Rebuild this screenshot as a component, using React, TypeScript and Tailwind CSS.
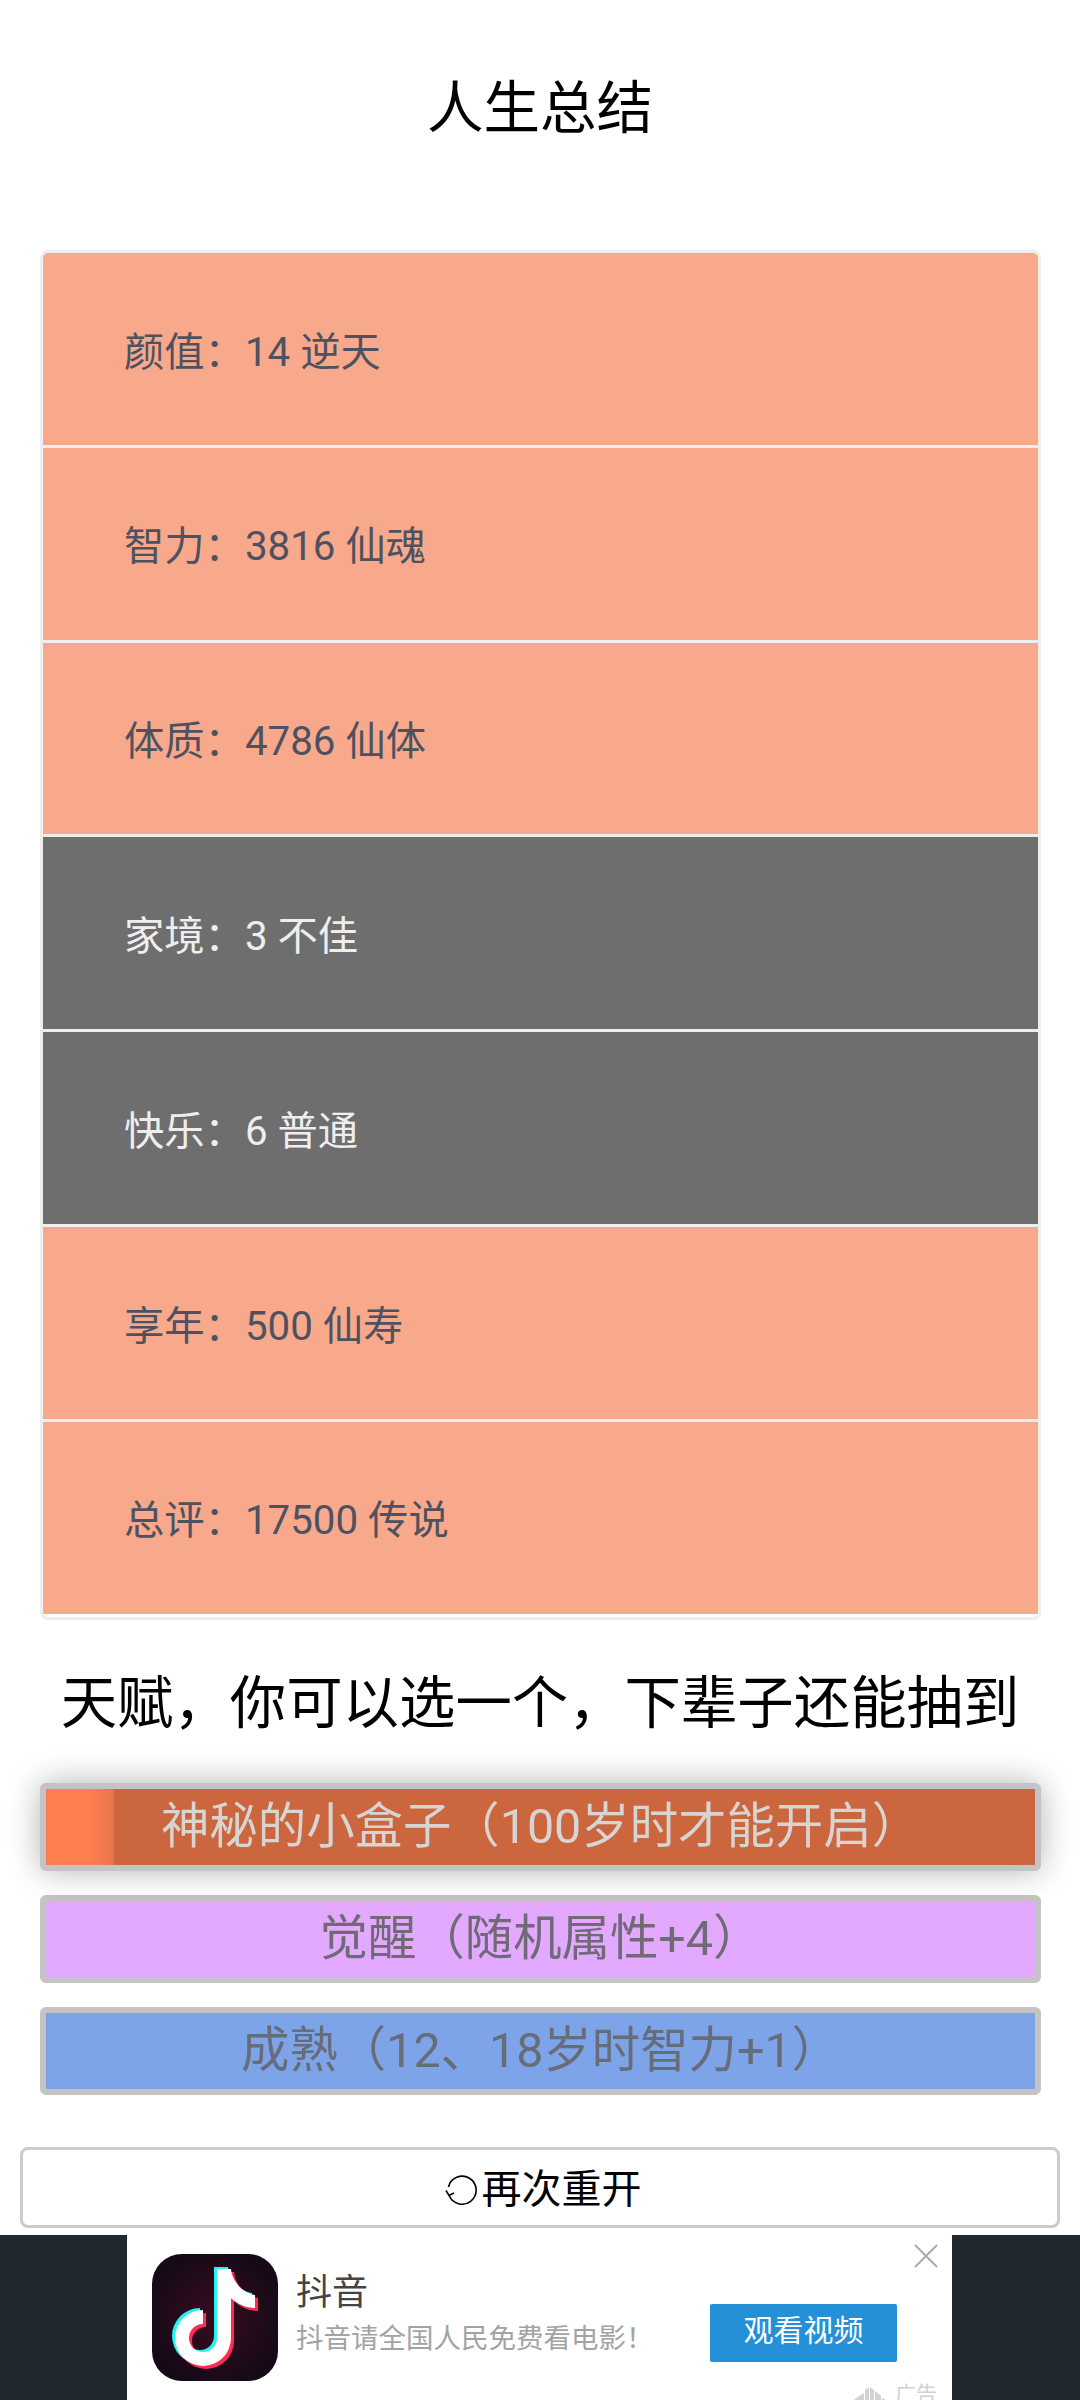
const FONT = "font-['Roboto','Noto_Sans_CJK_SC',sans-serif]";

const rows = [
  { text: '颜值：14 逆天', dark: false },
  { text: '智力：3816 仙魂', dark: false },
  { text: '体质：4786 仙体', dark: false },
  { text: '家境：3 不佳', dark: true },
  { text: '快乐：6 普通', dark: true },
  { text: '享年：500 仙寿', dark: false },
  { text: '总评：17500 传说', dark: false },
];

function DouyinIcon() {
  const note =
    'M65 15 H79 C80 27 90 39 103 41 V54 C94 54 85 50 79 44 V84 A28 28 0 1 1 51 56 V70 A14 14 0 1 0 65 84 Z';
  return (
    <div className="h-[127px] w-[126px] shrink-0 overflow-hidden rounded-[30px] bg-[radial-gradient(circle,#3a0b20_0%,#160a18_75%)]">
      <svg viewBox="0 0 126 127" className="h-full w-full blur-[0.7px]">
        <path d={note} fill="#25f4ee" transform="translate(-3 -2)" />
        <path d={note} fill="#fe2c55" transform="translate(3 3)" />
        <path d={note} fill="#ffffff" />
      </svg>
    </div>
  );
}

function AdBadge() {
  return (
    <div className="absolute bottom-[-7px] right-[15px] flex items-center gap-[7px] text-[21px] leading-[26px] text-[#d2d2d2]">
      <svg viewBox="0 0 36 16" className="mt-[3px] h-[16px] w-[36px]" fill="#d2d2d2">
        <path d="M0 14 L12 6 V14 Z" />
        <path d="M13 3 L17 0 V14 H13 Z" />
        <path d="M18 0 L22 3 V14 H18 Z" />
        <path d="M23 4 L29 9 V14 H23 Z" />
        <path d="M30 11 L36 14 H30 Z" />
      </svg>
      <span>广告</span>
    </div>
  );
}

export default function App() {
  return (
    <div className={`${FONT} flex h-[2400px] w-[1080px] flex-col overflow-hidden bg-white text-black`}>
      <h1 className="h-[250px] pt-[67px] text-center text-[56.5px] font-normal leading-[84px]">人生总结</h1>

      <ul className="ml-10 mr-[39px] overflow-hidden rounded-[8px] border-[3px] border-[#eeeeee] pb-[3px] text-[40.3px]">
        {rows.map((row, i) => (
          <li
            key={row.text}
            className={`flex items-center pl-[81px] pt-[8px] ${i < 6 ? 'h-[194.8px] border-b-[3px] border-[#eeeeee]' : 'h-[191.8px]'} ${
              row.dark ? 'bg-[#6e6e6e] text-[#eeeeee]' : 'bg-[#f8a98b] text-[#4e5260]'
            }`}
          >
            {row.text}
          </li>
        ))}
      </ul>

      <h2 className="h-[163px] pt-[42px] text-center text-[56.4px] font-normal leading-[84px]">天赋，你可以选一个，下辈子还能抽到</h2>

      <div className="ml-10 mr-[39px] flex flex-col gap-6 text-center text-[48.4px]">
        <div className="relative flex h-[88px] items-center justify-center rounded-[6px] border-[6px] border-[#c4c4c4] bg-[#cb663f] pt-[2px] text-[#d8d4d2] shadow-[0_0_32px_rgba(0,0,0,0.3)]">
          <div className="absolute inset-y-0 left-0 w-[68px] bg-[linear-gradient(90deg,#ff7f50_65%,#e9744a_100%)]" />
          <span className="relative">神秘的小盒子（100岁时才能开启）</span>
        </div>
        <div className="flex h-[88px] items-center justify-center rounded-[6px] border-[6px] border-[#c4c4c4] bg-[#e2a9ff] pt-[2px] text-[#6f6a76]">
          觉醒（随机属性+4）
        </div>
        <div className="flex h-[88px] items-center justify-center rounded-[6px] border-[6px] border-[#c4c4c4] bg-[#7da4e8] pt-[2px] text-[#666c78]">
          成熟（12、18岁时智力+1）
        </div>
      </div>

      <button className="mx-5 mt-[52px] flex h-[81px] items-center justify-center rounded-[8px] border-[3px] border-[#cccccc] bg-white pl-[6px] pt-[5px] text-[40px] leading-none text-black">
        <svg viewBox="0 0 34 32" className="mr-[3px] h-[32px] w-[34px]" fill="none" stroke="#000" strokeWidth="1.6">
          <path d="M3.5 13 A14 14 0 1 1 4 21" />
          <path d="M1 16.5 L4 21.5 L9 19" />
        </svg>
        再次重开
      </button>

      <div className="mt-[7px] flex h-[165px] bg-[#212830] pl-[127px]">
        <div className="relative flex w-[825px] overflow-hidden bg-white pl-[25px] pt-[19px]">
          <DouyinIcon />
          <div className="ml-[18px] flex flex-col">
            <span className="mt-[20px] text-[36px] leading-[38px] text-[#444444]">抖音</span>
            <span className="mt-[10px] text-[27.5px] leading-[34px] text-[#a3a3a3]">抖音请全国人民免费看电影！</span>
          </div>
          <div className="absolute left-[583px] top-[69px] flex h-[58px] w-[187px] items-center justify-center rounded-[2px] bg-[#2490d8] pb-[4px] text-[30px] text-white">
            观看视频
          </div>
          <svg viewBox="0 0 24 24" className="absolute right-[14px] top-[9px] h-[24px] w-[24px]" fill="none" stroke="#ababab" strokeWidth="2">
            <path d="M1 1 L23 23 M23 1 L1 23" />
          </svg>
          <AdBadge />
        </div>
      </div>
    </div>
  );
}
